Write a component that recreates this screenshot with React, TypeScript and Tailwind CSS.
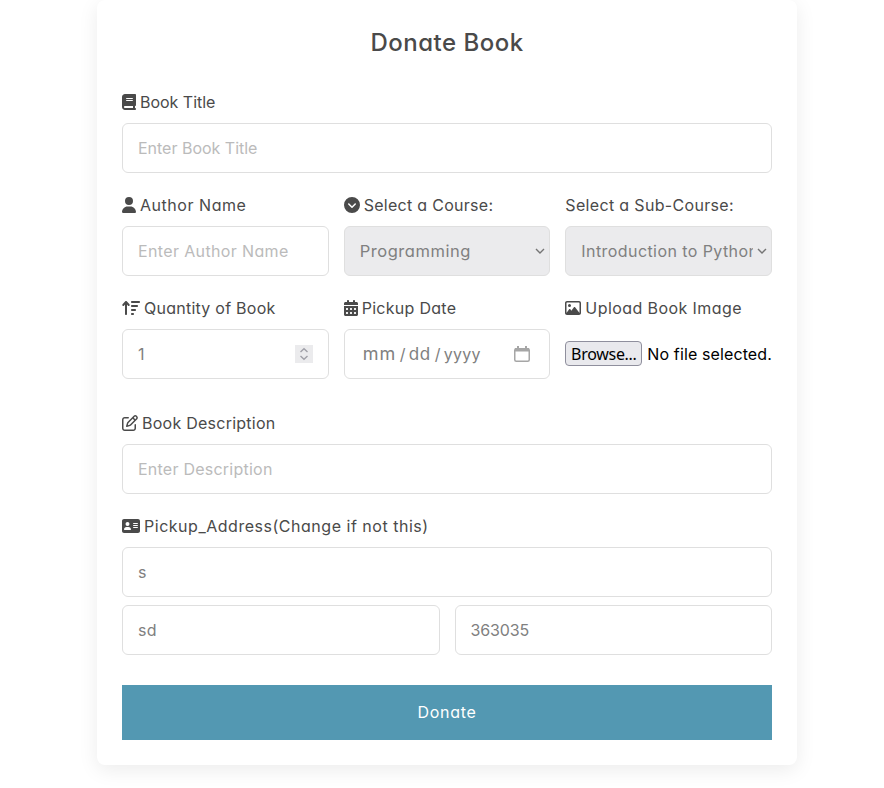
import type { ReactNode } from "react";
import {
  FaAddressCard,
  FaArrowUpWideShort,
  FaBook,
  FaCalendarDays,
  FaCircleChevronDown,
  FaRegImage,
  FaRegPenToSquare,
  FaUser,
} from "react-icons/fa6";

function Field({
  icon,
  label,
  tracking,
  children,
}: {
  icon?: ReactNode;
  label: string;
  tracking: string;
  children: ReactNode;
}) {
  return (
    <div className="min-w-0 flex-1">
      <div className="mb-[9px] flex h-6 items-center gap-1 whitespace-nowrap text-[#4a4a4a]">
        {icon}
        <span className={tracking}>{label}</span>
      </div>
      {children}
    </div>
  );
}

function Box({ className = "", children }: { className?: string; children: ReactNode }) {
  return (
    <div
      className={`flex h-[50px] min-w-0 items-center whitespace-nowrap rounded-md border border-[#dfdfdf] pl-[15px] ${className}`}
    >
      {children}
    </div>
  );
}

function Caret() {
  return (
    <svg className="h-[10px] w-[10px] shrink-0" viewBox="0 0 10 10" fill="none" stroke="#757575" strokeWidth="1.4">
      <path d="M1 3l4 4 4-4" />
    </svg>
  );
}

export default function App() {
  return (
    <div className="h-[788px] overflow-hidden bg-white font-['Inter','Liberation_Sans',sans-serif] text-base [font-feature-settings:'cv11']">
      <div className="ml-[97px] h-[765px] w-[700px] rounded-lg bg-white px-[25px] shadow-[0_5px_20px_rgba(0,0,0,0.08)]">
        <h1 className="pt-[25px] text-center text-2xl leading-9 font-medium tracking-[0.5px] text-[#4a4a4a]">
          Donate Book
        </h1>

        <div className="mt-[29px] flex">
          <Field icon={<FaBook className="h-4 w-[14px]" />} label="Book Title" tracking="tracking-[-0.02px]">
            <Box className="text-[#bbbbbb]">
              <span className="tracking-[-0.01px]">Enter Book Title</span>
            </Box>
          </Field>
        </div>

        <div className="mt-5 flex gap-[15px]">
          <Field icon={<FaUser className="h-4 w-[14px]" />} label="Author Name" tracking="tracking-[0.54px]">
            <Box className="text-[#bbbbbb]">
              <span className="tracking-[0.36px]">Enter Author Name</span>
            </Box>
          </Field>
          <Field icon={<FaCircleChevronDown className="size-4" />} label="Select a Course:" tracking="tracking-[0.28px]">
            <Box className="justify-between bg-[#ebebed] pr-1 text-[#808080]">
              <span className="text-[16.5px] tracking-[0.55px]">Programming</span>
              <Caret />
            </Box>
          </Field>
          <Field label="Select a Sub-Course:" tracking="tracking-[0.33px]">
            <Box className="justify-between bg-[#ebebed] pr-1 text-[#808080]">
              <span className="w-[172px] overflow-hidden tracking-[0.42px]">Introduction to Python</span>
              <Caret />
            </Box>
          </Field>
        </div>

        <div className="mt-5 flex gap-[15px]">
          <Field
            icon={<FaArrowUpWideShort className="h-4 w-[18px]" />}
            label="Quantity of Book"
            tracking="tracking-[0.25px]"
          >
            <Box className="justify-between pr-[15px] text-[#808080]">
              <span>1</span>
              <span className="flex h-[18px] w-[18px] items-center justify-center bg-[#ebebed]">
                <svg className="h-[14px] w-[10px]" viewBox="0 0 10 14" fill="none" stroke="#a0a0a8" strokeWidth="1.4">
                  <path d="M1.5 5L5 1.7 8.5 5M1.5 9L5 12.3 8.5 9" />
                </svg>
              </span>
            </Box>
          </Field>
          <Field icon={<FaCalendarDays className="h-4 w-[14px]" />} label="Pickup Date" tracking="tracking-[0.28px]">
            <Box className="justify-between pr-[19px] pl-[18px] text-[#808080]">
              <span className="flex items-baseline">
                <span className="w-[37px] text-[18px] tracking-[1px]">mm</span>
                <span className="w-[9px]">/</span>
                <span className="w-[26px] text-[17px] tracking-[0.6px]">dd</span>
                <span className="w-[9px]">/</span>
                <span className="tracking-[0.3px]">yyyy</span>
              </span>
              <svg className="mb-px h-4 w-4" viewBox="0 0 16 16" fill="none">
                <rect x="0.75" y="2.75" width="14.5" height="12.5" rx="1.5" stroke="#a6a6a6" strokeWidth="1.5" />
                <path d="M1 2h14v3.5H1zM3 0h2v3H3zM11 0h2v3h-2z" fill="#a6a6a6" />
              </svg>
            </Box>
          </Field>
          <Field icon={<FaRegImage className="size-4" />} label="Upload Book Image" tracking="tracking-[0.42px]">
            <div className="flex h-[50px] items-center gap-[5px] whitespace-nowrap text-black">
              <button
                type="button"
                className="mb-px flex h-[25px] w-[77px] shrink-0 items-center justify-center rounded border border-[#8f8f9d] bg-[#e9e9ed] font-['Noto_Sans','Open_Sans',sans-serif] leading-none tracking-[-0.3px]"
              >
                Browse...
              </button>
              <span className="tracking-[0.12px]">No file selected.</span>
            </div>
          </Field>
        </div>

        <div className="mt-8 flex">
          <Field icon={<FaRegPenToSquare className="size-4" />} label="Book Description" tracking="tracking-[0.25px]">
            <Box className="text-[#bbbbbb]">
              <span className="tracking-[0.24px]">Enter Description</span>
            </Box>
          </Field>
        </div>

        <div className="mt-5 flex">
          <Field
            icon={<FaAddressCard className="h-4 w-[18px]" />}
            label="Pickup_Address(Change if not this)"
            tracking="tracking-[0.52px]"
          >
            <Box className="text-[#808080]">
              <span>s</span>
            </Box>
          </Field>
        </div>
        <div className="mt-2 flex gap-[15px]">
          <Box className="flex-1 text-[#808080]">
            <span className="tracking-[0.4px]">sd</span>
          </Box>
          <Box className="flex-1 text-[#808080]">
            <span className="tracking-[-0.15px]">363035</span>
          </Box>
        </div>

        <button
          type="button"
          className="mt-[30px] flex h-[55px] w-full items-center justify-center bg-[#5398b2] pb-px tracking-[0.7px] text-white"
        >
          Donate
        </button>
      </div>
    </div>
  );
}
